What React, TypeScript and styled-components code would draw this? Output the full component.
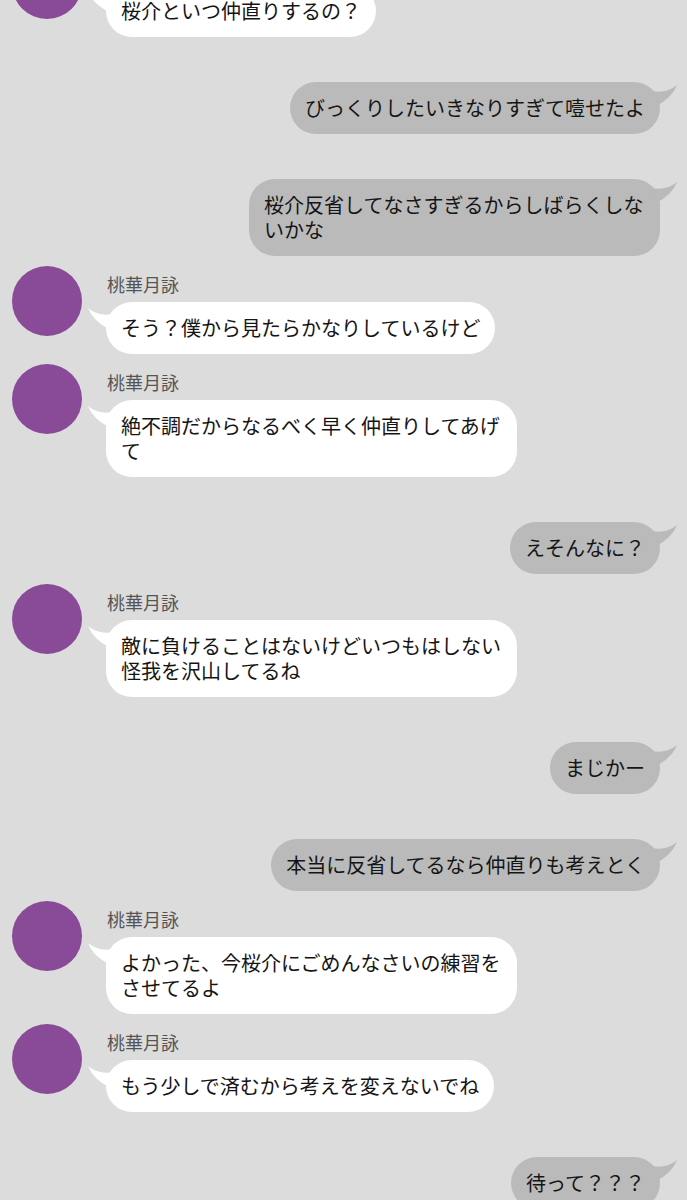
import React from "react";
import styled, { createGlobalStyle } from "styled-components";

const GlobalStyle = createGlobalStyle`
  html, body {
    margin: 0;
    padding: 0;
    background: #dcdcdc;
  }
  body {
    font-family: "Noto Sans CJK JP", "Noto Sans", sans-serif;
    overflow: hidden;
  }
`;

type Side = "left" | "right";

interface Message {
  side: Side;
  text: string;
  name?: string;
}

const NAME = "桃華月詠";

const messages: Message[] = [
  { side: "left", name: NAME, text: "桜介といつ仲直りするの？" },
  { side: "right", text: "びっくりしたいきなりすぎて噎せたよ" },
  { side: "right", text: "桜介反省してなさすぎるからしばらくしないかな" },
  { side: "left", name: NAME, text: "そう？僕から見たらかなりしているけど" },
  { side: "left", name: NAME, text: "絶不調だからなるべく早く仲直りしてあげて" },
  { side: "right", text: "えそんなに？" },
  { side: "left", name: NAME, text: "敵に負けることはないけどいつもはしない怪我を沢山してるね" },
  { side: "right", text: "まじかー" },
  { side: "right", text: "本当に反省してるなら仲直りも考えとく" },
  { side: "left", name: NAME, text: "よかった、今桜介にごめんなさいの練習をさせてるよ" },
  { side: "left", name: NAME, text: "もう少しで済むから考えを変えないでね" },
  { side: "right", text: "待って？？？" },
];

const Screen = styled.div`
  width: 687px;
  height: 1200px;
  overflow: hidden;
  background: #dcdcdc;
`;

const Thread = styled.div`
  display: flex;
  flex-direction: column;
  margin-top: -61px;
`;

const Row = styled.div<{ $side: Side }>`
  display: flex;
  align-items: flex-start;
  justify-content: ${(p) => (p.$side === "right" ? "flex-end" : "flex-start")};
  padding: ${(p) => (p.$side === "right" ? "0 27px 0 0" : "0 0 0 12px")};
  margin-top: ${(p) => (p.$side === "right" ? "45px" : "10px")};
`;

const Avatar = styled.div`
  flex: none;
  width: 70px;
  height: 70px;
  border-radius: 50%;
  background: #894a97;
`;

const Body = styled.div`
  display: flex;
  flex-direction: column;
  align-items: flex-start;
  margin-left: 24px;
`;

const Name = styled.div`
  margin: 6px 0 0 1px;
  font-size: 18px;
  line-height: 24px;
  color: #555555;
`;

const Bubble = styled.div<{ $side: Side }>`
  position: relative;
  box-sizing: border-box;
  max-width: 411px;
  margin-top: ${(p) => (p.$side === "left" ? "6px" : "0")};
  padding: 13px 15px 14px;
  border-radius: 26px;
  background: ${(p) => (p.$side === "left" ? "#ffffff" : "#bababa")};
  color: #151515;
  font-size: 20px;
  line-height: 25px;
  letter-spacing: 0;
`;

const Tail = styled.svg<{ $side: Side }>`
  position: absolute;
  width: 26px;
  height: 26px;
  top: ${(p) => (p.$side === "left" ? "3px" : "0")};
  ${(p) => (p.$side === "left" ? "left: -19px; transform: scaleX(-1);" : "right: -18px;")}
`;

const BubbleTail = ({ side }: { side: Side }) => (
  <Tail $side={side} viewBox="0 0 26 26">
    <path
      d="M0,9 Q14,12 25,3 Q20,16 4,24 Z"
      fill={side === "left" ? "#ffffff" : "#bababa"}
    />
  </Tail>
);

const ChatBubble = ({ side, text }: { side: Side; text: string }) => (
  <Bubble $side={side}>
    <BubbleTail side={side} />
    {text}
  </Bubble>
);

export default function App() {
  return (
    <Screen>
      <GlobalStyle />
      <Thread>
        {messages.map((m, i) =>
          m.side === "left" ? (
            <Row key={i} $side="left">
              <Avatar />
              <Body>
                <Name>{m.name}</Name>
                <ChatBubble side="left" text={m.text} />
              </Body>
            </Row>
          ) : (
            <Row key={i} $side="right">
              <ChatBubble side="right" text={m.text} />
            </Row>
          )
        )}
      </Thread>
    </Screen>
  );
}
